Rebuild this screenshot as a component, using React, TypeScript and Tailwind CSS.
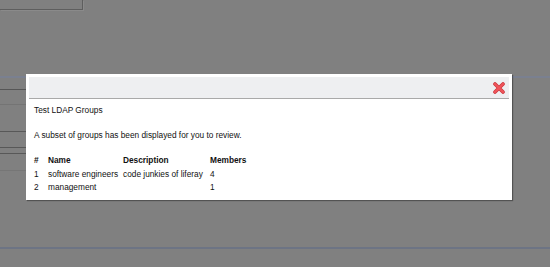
import React from "react";

type Group = {
  id: number;
  name: string;
  description: string;
  members: number;
};

const groups: Group[] = [
  { id: 1, name: "software engineers", description: "code junkies of liferay", members: 4 },
  { id: 2, name: "management", description: "", members: 1 },
];

function CloseIcon() {
  return (
    <svg width="12" height="12" viewBox="0 0 12 12">
      <path d="M2 2 L10 10 M10 2 L2 10" stroke="#c9333a" strokeWidth="3.6" strokeLinecap="round" />
      <path d="M2 2 L10 10 M10 2 L2 10" stroke="#f0555b" strokeWidth="2.4" strokeLinecap="round" />
    </svg>
  );
}

export default function App() {
  return (
    <div
      className="relative h-[267px] w-[550px] overflow-hidden bg-[#808080]"
      style={{ fontFamily: '"Liberation Sans", Arial, sans-serif' }}
    >
      {/* page behind the overlay */}
      <div className="flex flex-col">
        <div className="h-[10px] w-[83px] border-b border-r border-[#5e5e5e] shadow-[1px_1px_0_#8a8a8a]" />
        <div className="mt-[66px] h-[2px] w-full bg-[#7a8090]" />
        <div className="mt-[11px] h-[16px] w-[40px] border-b border-t border-b-[#747474] border-t-[#565656]" />
        <div className="mt-[26px] h-[17px] w-[40px] border-b border-t border-[#585858]" />
        <div className="mt-[5px] h-[18px] w-[40px] border-b border-t border-b-[#767676] border-t-[#585858]" />
        <div className="mt-[76px] h-[2px] w-full bg-[#6d7484]" />
      </div>

      {/* dialog */}
      <div className="absolute left-[26px] top-[74px] w-[486px] bg-white p-[3px] shadow-[1px_1px_1px_rgba(0,0,0,0.35)]">
        <div className="flex h-[22px] items-center justify-end border-b border-[#a9a9a9] bg-[#eeeff1] pr-[4px]">
          <CloseIcon />
        </div>
        <div className="px-[5px] pb-[2px] pt-[5px] text-[8.3px] leading-[13px] text-[#111]">
          <p>Test LDAP Groups</p>
          <p className="mt-[12px]">A subset of groups has been displayed for you to review.</p>
          <div className="mt-[12px] grid grid-cols-[14px_75px_87px_auto] leading-[13.5px]">
            <span className="font-bold">#</span>
            <span className="font-bold">Name</span>
            <span className="font-bold">Description</span>
            <span className="font-bold">Members</span>
            {groups.map((g) => (
              <React.Fragment key={g.id}>
                <span>{g.id}</span>
                <span>{g.name}</span>
                <span>{g.description}</span>
                <span>{g.members}</span>
              </React.Fragment>
            ))}
          </div>
        </div>
      </div>
    </div>
  );
}
